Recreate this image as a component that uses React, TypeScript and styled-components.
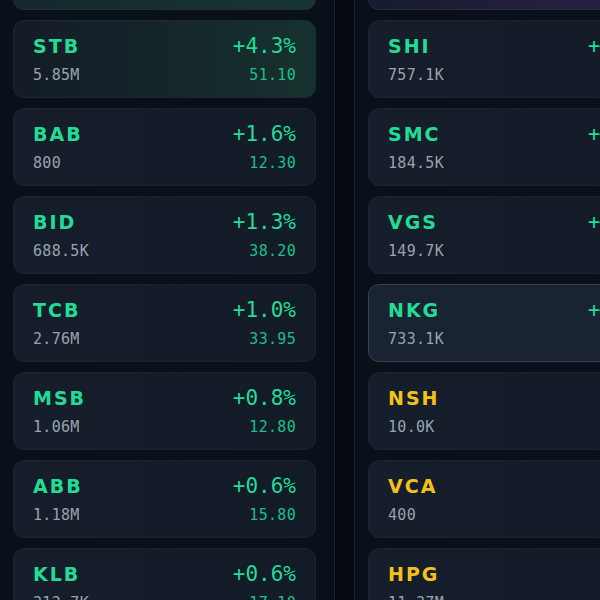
import styled, { createGlobalStyle, css } from "styled-components";

type Tone = "up" | "flat" | "ceil";

interface Quote {
  ticker: string;
  volume: string;
  change: string;
  price: string;
  tone: Tone;
  tint?: "green" | "strong" | "purple";
  active?: boolean;
}

const LEFT: Quote[] = [
  { ticker: "EIB", volume: "9.12M", change: "+5.8%", price: "21.90", tone: "up", tint: "strong" },
  { ticker: "STB", volume: "5.85M", change: "+4.3%", price: "51.10", tone: "up", tint: "green" },
  { ticker: "BAB", volume: "800", change: "+1.6%", price: "12.30", tone: "up" },
  { ticker: "BID", volume: "688.5K", change: "+1.3%", price: "38.20", tone: "up" },
  { ticker: "TCB", volume: "2.76M", change: "+1.0%", price: "33.95", tone: "up" },
  { ticker: "MSB", volume: "1.06M", change: "+0.8%", price: "12.80", tone: "up" },
  { ticker: "ABB", volume: "1.18M", change: "+0.6%", price: "15.80", tone: "up" },
  { ticker: "KLB", volume: "312.7K", change: "+0.6%", price: "17.10", tone: "up" },
];

const RIGHT: Quote[] = [
  { ticker: "HAX", volume: "1.02M", change: "+6.9%", price: "14.70", tone: "ceil", tint: "purple" },
  { ticker: "SHI", volume: "757.1K", change: "+0.9%", price: "11.20", tone: "up" },
  { ticker: "SMC", volume: "184.5K", change: "+0.8%", price: "12.60", tone: "up" },
  { ticker: "VGS", volume: "149.7K", change: "+0.6%", price: "31.50", tone: "up" },
  { ticker: "NKG", volume: "733.1K", change: "+0.5%", price: "13.40", tone: "up", active: true },
  { ticker: "NSH", volume: "10.0K", change: "0.0%", price: "6.20", tone: "flat" },
  { ticker: "VCA", volume: "400", change: "0.0%", price: "9.10", tone: "flat" },
  { ticker: "HPG", volume: "11.37M", change: "0.0%", price: "26.70", tone: "flat" },
];

const GlobalStyle = createGlobalStyle`
  html, body {
    margin: 0;
    padding: 0;
    background: #070a12;
    overflow: hidden;
  }
  * { box-sizing: border-box; }
`;

const Board = () => {
  return (
    <Screen>
      <GlobalStyle />
      <Panel $side="left">
        <List>
          {LEFT.map((q) => (
            <QuoteCard key={q.ticker} q={q} />
          ))}
        </List>
      </Panel>
      <Gutter />
      <Panel $side="right">
        <List>
          {RIGHT.map((q) => (
            <QuoteCard key={q.ticker} q={q} />
          ))}
        </List>
      </Panel>
    </Screen>
  );
};

const QuoteCard = ({ q }: { q: Quote }) => (
  <Card $tint={q.tint} $active={q.active}>
    <Row>
      <Ticker $tone={q.tone}>{q.ticker}</Ticker>
      <Change $tone={q.tone}>{q.change}</Change>
    </Row>
    <SubRow>
      <Volume>{q.volume}</Volume>
      <Price $tone={q.tone}>{q.price}</Price>
    </SubRow>
  </Card>
);

export default Board;

const toneColor = (t: Tone) =>
  t === "flat" ? "#f2c21b" : t === "ceil" ? "#c58bff" : "#22dc95";

const Screen = styled.div`
  width: 600px;
  height: 600px;
  display: flex;
  overflow: hidden;
  background: #070a12;
`;

const Panel = styled.section<{ $side: "left" | "right" }>`
  height: 600px;
  background: #0a101a;
  padding: 0 13px;
  overflow: hidden;
  flex-shrink: 0;

  ${({ $side }) =>
    $side === "left"
      ? css`
          width: 335px;
          padding-right: 18px;
          border-right: 1px solid #1a212d;
        `
      : css`
          width: 330px;
          border-left: 1px solid #1a212d;
        `}
`;

const Gutter = styled.div`
  width: 19px;
  flex-shrink: 0;
  background: #06080f;
`;

const List = styled.div`
  display: flex;
  flex-direction: column;
  gap: 10px;
  margin-top: -68px;
  width: 303px;
`;

const Card = styled.div<{ $tint?: string; $active?: boolean }>`
  height: 78px;
  flex-shrink: 0;
  border-radius: 11px;
  border: 1px solid #1c2431;
  background: linear-gradient(90deg, #161e2b 0%, #131b27 100%);
  padding: 13px 19px 0 19px;
  display: flex;
  flex-direction: column;
  gap: 7px;

  ${({ $tint }) =>
    $tint === "green" &&
    css`
      background: linear-gradient(90deg, #141c27 0%, #152a2b 70%, #16322f 100%);
      border-color: #1b2a2e;
    `}
  ${({ $tint }) =>
    $tint === "strong" &&
    css`
      background: linear-gradient(90deg, #15262c 0%, #173632 100%);
      border-color: #1c3232;
    `}
  ${({ $tint }) =>
    $tint === "purple" &&
    css`
      background: linear-gradient(90deg, #181c2f 0%, #2a2147 100%);
      border-color: #262a42;
    `}
  ${({ $active }) =>
    $active &&
    css`
      background: #1a2332;
      border-color: #384252;
    `}
`;

const Row = styled.div`
  display: flex;
  align-items: baseline;
  justify-content: space-between;
  height: 24px;
  line-height: 24px;
`;

const SubRow = styled.div`
  display: flex;
  align-items: baseline;
  justify-content: space-between;
  height: 20px;
  line-height: 20px;
`;

const Ticker = styled.span<{ $tone: Tone }>`
  font-family: "DejaVu Sans", "Noto Sans", sans-serif;
  font-weight: 700;
  font-size: 19px;
  letter-spacing: 2px;
  color: ${({ $tone }) => toneColor($tone)};
`;

const Change = styled.span<{ $tone: Tone }>`
  font-family: "DejaVu Sans Mono", "Liberation Mono", monospace;
  font-size: 21px;
  color: ${({ $tone }) => toneColor($tone)};
`;

const Volume = styled.span`
  font-family: "DejaVu Sans Mono", "Liberation Mono", monospace;
  font-size: 15px;
  letter-spacing: 0.3px;
  color: #9aa2af;
`;

const Price = styled.span<{ $tone: Tone }>`
  font-family: "DejaVu Sans Mono", "Liberation Mono", monospace;
  font-size: 15px;
  letter-spacing: 0.3px;
  color: ${({ $tone }) => ($tone === "up" ? "#1fbf85" : toneColor($tone))};
`;
